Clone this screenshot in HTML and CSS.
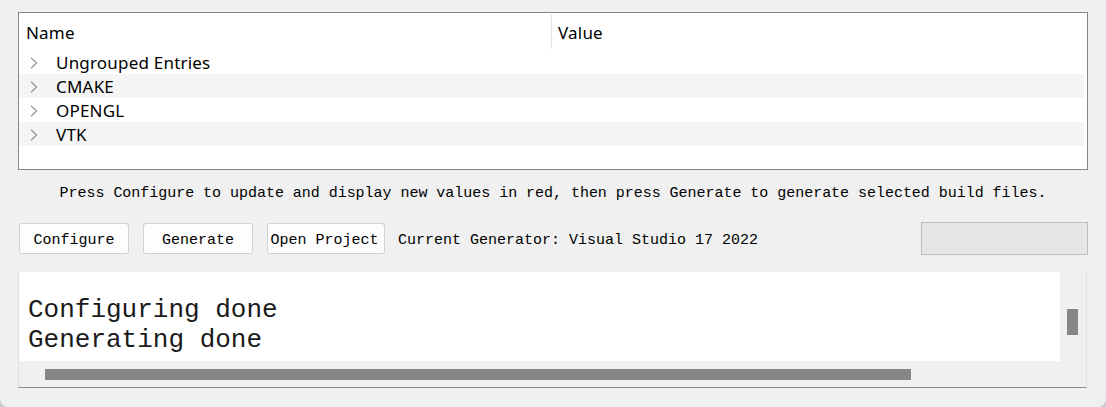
FILE: index.html
```html
<!DOCTYPE html>
<html>
<head>
<meta charset="utf-8">
<link rel="stylesheet" href="styles.css">
</head>
<body>
<div class="app">
  <div class="tree">
    <div class="tree-header">
      <div class="col col-name">Name</div>
      <div class="col col-value">Value</div>
    </div>
    <div class="rows">
      <div class="row"><svg class="chev" width="8" height="12" viewBox="0 0 8 12"><polyline points="1,0.8 6.6,6 1,11.2" fill="none" stroke="#959595" stroke-width="1.2"/></svg><span class="label">Ungrouped Entries</span></div>
      <div class="row alt"><svg class="chev" width="8" height="12" viewBox="0 0 8 12"><polyline points="1,0.8 6.6,6 1,11.2" fill="none" stroke="#959595" stroke-width="1.2"/></svg><span class="label">CMAKE</span></div>
      <div class="row"><svg class="chev" width="8" height="12" viewBox="0 0 8 12"><polyline points="1,0.8 6.6,6 1,11.2" fill="none" stroke="#959595" stroke-width="1.2"/></svg><span class="label">OPENGL</span></div>
      <div class="row alt"><svg class="chev" width="8" height="12" viewBox="0 0 8 12"><polyline points="1,0.8 6.6,6 1,11.2" fill="none" stroke="#959595" stroke-width="1.2"/></svg><span class="label">VTK</span></div>
    </div>
  </div>
  <div class="info">Press Configure to update and display new values in red, then press Generate to generate selected build files.</div>
  <div class="toolbar">
    <button class="btn">Configure</button>
    <button class="btn">Generate</button>
    <button class="btn btn-wide">Open Project</button>
    <span class="generator">Current Generator: Visual Studio 17 2022</span>
    <div class="progress"></div>
  </div>
  <div class="output">
    <div class="output-text">Configuring done<br>Generating done</div>
    <div class="vscroll"><div class="vthumb"></div></div>
    <div class="hscroll"><div class="hthumb"></div></div>
    <div class="corner"></div>
  </div>
</div>
</body>
</html>
```
FILE: styles.css
```css
html, body {
  margin: 0;
  padding: 0;
  background: #c9c9c9;
}
.app {
  width: 1106px;
  height: 407px;
  box-sizing: border-box;
  background: #f0f0f0;
  border-radius: 0 0 8px 8px;
  padding: 12px 18px 0 18px;
  display: flex;
  flex-direction: column;
  font-family: "Noto Sans", sans-serif;
  overflow: hidden;
}
.tree {
  height: 158px;
  box-sizing: border-box;
  border: 1px solid #858585;
  background: #ffffff;
  display: flex;
  flex-direction: column;
}
.tree-header {
  height: 37px;
  display: flex;
  font-size: 17px;
  letter-spacing: 0.2px;
  color: #000;
}
.col {
  display: flex;
  align-items: center;
  box-sizing: border-box;
  padding-top: 2px;
}
.col-name {
  width: 533px;
  padding-left: 7px;
  border-right: 1px solid #e6e6e6;
  margin: 1px 0 1px 0;
}
.col-value {
  padding-left: 6px;
}
.rows {
  padding-right: 3px;
}
.row {
  height: 24px;
  display: flex;
  align-items: center;
  font-size: 17px;
  letter-spacing: 0.2px;
  color: #000;
}
.row.alt {
  background: #f5f5f5;
}
.chev {
  margin-left: 11px;
  margin-right: 18px;
  margin-top: 1px;
}
.info {
  height: 42px;
  line-height: 42px;
  padding-top: 3px;
  box-sizing: border-box;
  text-align: center;
  font-family: "Liberation Mono", monospace;
  font-size: 15px;
  color: #000;
  white-space: nowrap;
  letter-spacing: -0.03px;
}
.toolbar {
  margin-top: 10px;
  height: 33px;
  display: flex;
  align-items: center;
}
.btn {
  height: 31px;
  width: 110px;
  margin: 0 14px 0 0;
  padding: 3px 0 0 0;
  box-sizing: border-box;
  background: #fdfdfd;
  border: 1px solid #d0d0d0;
  border-radius: 3px;
  font-family: "Liberation Mono", monospace;
  font-size: 15px;
  color: #000;
  text-align: center;
  overflow: hidden;
  white-space: nowrap;
}
.btn:first-child {
  margin-left: 1px;
}
.btn-wide {
  width: 118px;
  margin-right: 13px;
  text-indent: -3px;
}
.generator {
  font-family: "Liberation Mono", monospace;
  font-size: 15px;
  color: #000;
  white-space: nowrap;
  padding-top: 4px;
}
.progress {
  margin-left: auto;
  width: 167px;
  height: 33px;
  box-sizing: border-box;
  background: #e6e6e6;
  border: 1px solid #bcbcbc;
}
.output {
  margin-top: 17px;
  height: 116px;
  box-sizing: border-box;
  display: grid;
  grid-template-columns: 1fr 26px;
  grid-template-rows: 89px 26px;
  border-left: 1px solid #e0e0e0;
  border-right: 1px solid #e0e0e0;
  border-bottom: 1px solid #8a8a8a;
  width: 1069px;
}
.output-text {
  background: #fff;
  font-family: "Liberation Mono", monospace;
  font-size: 26px;
  line-height: 30px;
  padding: 23px 0 0 9px;
  color: #1a1a1a;
  white-space: nowrap;
  overflow: hidden;
}
.vscroll {
  background: #f0f0f0;
  position: relative;
}
.vthumb {
  position: absolute;
  left: 7px;
  top: 37px;
  width: 11px;
  height: 26px;
  background: #868686;
}
.hscroll {
  background: #f0f0f0;
  position: relative;
}
.hthumb {
  position: absolute;
  left: 26px;
  top: 8px;
  width: 866px;
  height: 11px;
  background: #868686;
}
.corner {
  background: #f0f0f0;
}
```
